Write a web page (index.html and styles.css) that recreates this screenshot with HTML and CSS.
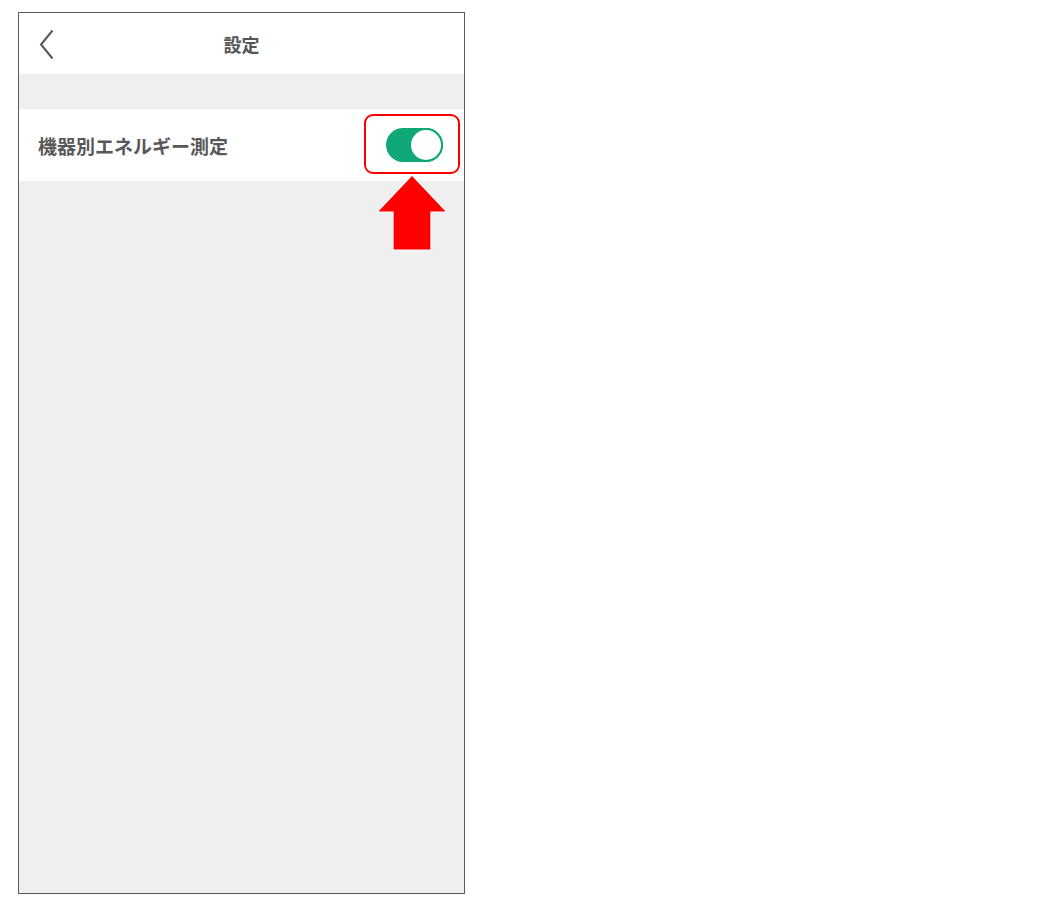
FILE: index.html
```html
<!DOCTYPE html>
<html lang="ja">
<head>
    <meta charset="UTF-8">
    <title>設定</title>
    <link rel="stylesheet" href="styles.css">
</head>
<body>
<div class="phone">
    <div class="header">
        <div class="back">
            <svg width="15" height="31" viewBox="0 0 15 31">
                <polyline points="13.5,1.5 2,15.5 13.5,29.5" fill="none" stroke="#555555" stroke-width="2"/>
            </svg>
        </div>
        <div class="header_text">設定</div>
    </div>
    <div class="spacer"></div>
    <div class="row">
        <div class="row_text">機器別エネルギー測定</div>
        <div class="toggle">
            <div class="knob"></div>
        </div>
    </div>
    <div class="mark_box"></div>
    <svg class="mark_arrow" width="72" height="78" viewBox="0 0 72 78">
        <polygon points="36,1 71,38 55,38 55,76 17,76 17,38 1,38" fill="#ff0000" stroke="#ffffff" stroke-width="1.2"/>
    </svg>
</div>
</body>
</html>
```

FILE: styles.css
```css
body {
    margin: 0;
    padding: 12px 0 0 18px;
    background-color: #ffffff;
    font-family: "Noto Sans CJK JP", "Noto Sans", sans-serif;
}

.phone {
    position: relative;
    width: 445px;
    height: 880px;
    border: 1px solid #5a5a5a;
    background-color: #efefef;
}

.header {
    display: flex;
    align-items: center;
    justify-content: center;
    position: relative;
    height: 61px;
    background-color: #ffffff;
}

.back {
    position: absolute;
    left: 20px;
    top: 16px;
    width: 15px;
    height: 31px;
}

.header_text {
    font-size: 18px;
    font-weight: bold;
    color: #555555;
    line-height: 24px;
}

.spacer {
    height: 35px;
}

.row {
    display: flex;
    align-items: center;
    justify-content: space-between;
    height: 72px;
    padding: 0 21px 0 19px;
    background-color: #ffffff;
}

.row_text {
    font-size: 19px;
    font-weight: bold;
    color: #585858;
    line-height: 24px;
    margin-top: 2px;
}

.toggle {
    display: flex;
    justify-content: flex-end;
    width: 57px;
    height: 34px;
    border-radius: 17px;
    background-color: #10a877;
}

.knob {
    width: 30px;
    height: 30px;
    border: 2px solid #10a877;
    border-radius: 50%;
    background-color: #ffffff;
}

.mark_box {
    position: absolute;
    left: 345px;
    top: 101px;
    width: 92px;
    height: 56px;
    border: 2px solid #ff0000;
    border-radius: 9px;
}

.mark_arrow {
    position: absolute;
    left: 357px;
    top: 161px;
}
```
